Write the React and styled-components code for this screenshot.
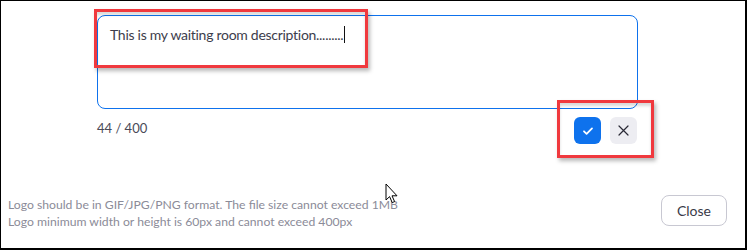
import React from "react";
import styled, { createGlobalStyle } from "styled-components";

const Global = createGlobalStyle`
  html, body { margin: 0; padding: 0; background: #fff; }
  body { font-family: Lato, "Open Sans", sans-serif; }
  * { box-sizing: border-box; }
`;

const Frame = styled.div`
  position: relative;
  width: 747px;
  height: 250px;
  border-style: solid;
  border-color: #000;
  border-width: 1px 2px 2px 1px;
  background: #fff;
  display: flex;
  flex-direction: column;
  padding-top: 14px;
  overflow: hidden;
`;

const Editor = styled.div`
  margin-left: 96px;
  width: 541px;
  display: flex;
  flex-direction: column;
`;

const TextBox = styled.div`
  height: 94px;
  border: 1px solid #0e72ed;
  border-radius: 8px;
  padding: 9px 12px;
  font-size: 14px;
  letter-spacing: -0.28px;
  color: #3d3d4c;
  line-height: 20px;
  display: flex;
  align-items: flex-start;
`;

const Caret = styled.span`
  display: inline-block;
  width: 1px;
  height: 17px;
  background: #111;
  margin-left: 1px;
  margin-top: 1px;
`;

const MetaRow = styled.div`
  display: flex;
  align-items: flex-start;
  justify-content: space-between;
  margin-top: 8px;
  padding-right: 1px;
`;

const Counter = styled.span`
  font-size: 13px;
  color: #4a4a58;
  margin-top: 3px;
`;

const Actions = styled.div`
  display: flex;
  gap: 9px;
`;

const IconButton = styled.button`
  width: 27px;
  height: 27px;
  border: none;
  border-radius: 6px;
  padding: 0;
  display: flex;
  align-items: center;
  justify-content: center;
  background: ${(p) => (p.$primary ? "#0e72ed" : "#ededf2")};
  color: ${(p) => (p.$primary ? "#fff" : "#2a2a36")};
`;

const Footer = styled.div`
  margin-top: auto;
  margin-bottom: 18px;
  padding-left: 7px;
  padding-right: 18px;
  display: flex;
  align-items: flex-end;
  justify-content: space-between;
`;

const Hint = styled.div`
  font-size: 12.2px;
  line-height: 17px;
  color: #8b8b98;
`;

const CloseButton = styled.button`
  width: 66px;
  height: 31px;
  margin-bottom: 4px;
  border: 1px solid #c8c8d2;
  border-radius: 8px;
  background: #fff;
  font-family: inherit;
  font-size: 14px;
  color: #3a3a48;
`;

const Annotation = styled.div`
  position: absolute;
  border: 3px solid #f0393e;
  box-shadow: 2px 3px 4px rgba(0, 0, 0, 0.28), inset 0 3px 3px rgba(0, 0, 0, 0.15);
  pointer-events: none;
`;

const Pointer = styled.svg`
  position: absolute;
  left: 384px;
  top: 182px;
`;

export default function App() {
  return (
    <>
      <Global />
      <Frame>
        <Editor>
          <TextBox>
            This is my waiting room description.........
            <Caret />
          </TextBox>
          <MetaRow>
            <Counter>44 / 400</Counter>
            <Actions>
              <IconButton $primary aria-label="Save">
                <svg width="12" height="10" viewBox="0 0 12 10">
                  <path d="M2 5.3 L4.6 7.8 L10 2.4" fill="none" stroke="#fff" strokeWidth="1.8" strokeLinecap="round" strokeLinejoin="round" />
                </svg>
              </IconButton>
              <IconButton aria-label="Cancel">
                <svg width="11" height="11" viewBox="0 0 11 11">
                  <path d="M1 1 L10 10 M10 1 L1 10" stroke="#2a2a36" strokeWidth="1.2" strokeLinecap="round" />
                </svg>
              </IconButton>
            </Actions>
          </MetaRow>
        </Editor>
        <Footer>
          <Hint>
            Logo should be in GIF/JPG/PNG format. The file size cannot exceed 1MB
            <br />
            Logo minimum width or height is 60px and cannot exceed 400px
          </Hint>
          <CloseButton>Close</CloseButton>
        </Footer>
        <Annotation style={{ left: 93, top: 8, width: 274, height: 59 }} />
        <Annotation style={{ left: 556, top: 99, width: 97, height: 58 }} />
        <Pointer width="14" height="22" viewBox="0 0 14 22">
          <path d="M1 1 L1 17 L4.6 13.6 L7.2 19.6 L9.6 18.6 L7 12.8 L12 12.8 Z" fill="#fff" stroke="#000" strokeWidth="1" strokeLinejoin="round" />
        </Pointer>
      </Frame>
    </>
  );
}
